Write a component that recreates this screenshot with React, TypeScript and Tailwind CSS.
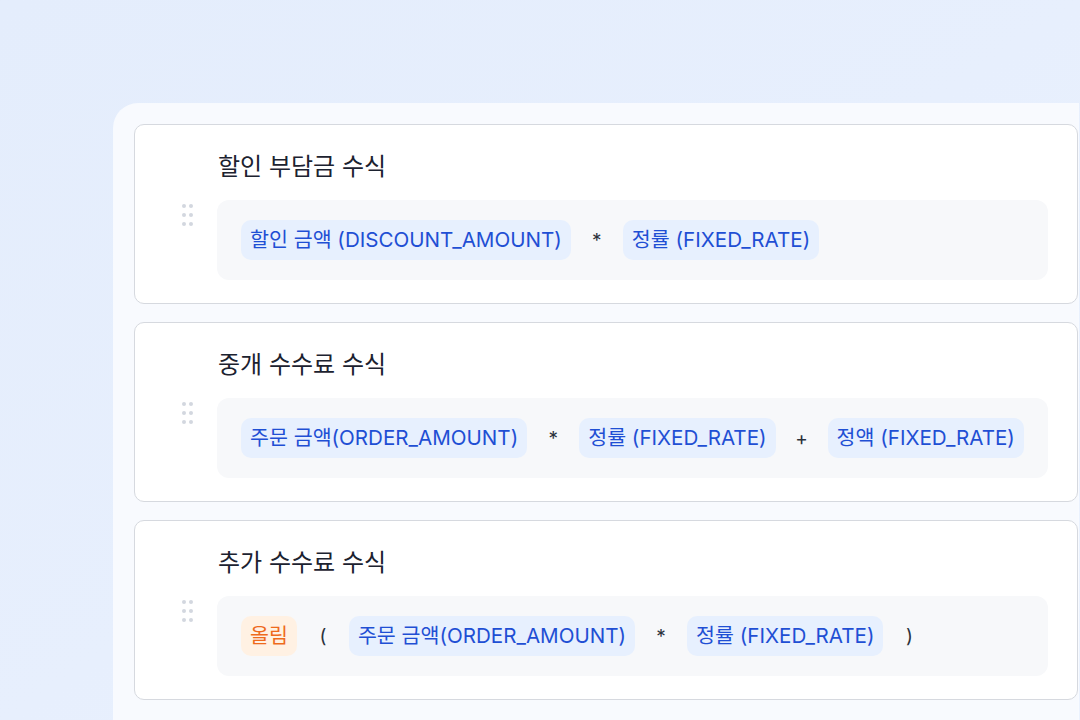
import React from "react";

type Token =
  | { kind: "chip"; text: string; tone?: "blue" | "orange" }
  | { kind: "op"; text: string };

const FONT = { fontFamily: 'Inter, "Noto Sans CJK KR", "Noto Sans", sans-serif' };

function Handle() {
  return (
    <div className="mt-1 grid w-[11px] shrink-0 grid-cols-2 gap-x-[3px] gap-y-[5px]">
      {Array.from({ length: 6 }).map((_, i) => (
        <span key={i} className="h-1 w-1 rounded-full bg-[#d3d7df]" />
      ))}
    </div>
  );
}

function Chip({ text, tone = "blue" }: { text: string; tone?: "blue" | "orange" }) {
  const cls =
    tone === "orange"
      ? "bg-[#fff1e3] text-[#ee6a1c]"
      : "bg-[#e7f0fe] text-[#1f4fd4]";
  return (
    <span
      className={`flex h-10 shrink-0 items-center whitespace-nowrap rounded-[10px] px-[9px] text-[20.6px] leading-none ${cls}`}
    >
      {text}
    </span>
  );
}

function Op({ text }: { text: string }) {
  return (
    <span className="flex h-10 w-7 shrink-0 items-center justify-center text-[19px] leading-none text-[#2b313b]">
      {text}
    </span>
  );
}

function FormulaCard({ title, tokens }: { title: string; tokens: Token[] }) {
  return (
    <div className="rounded-[10px] border border-[#d6d9df] bg-white pt-[26px] pb-[23px] pl-[47px] pr-[29px]">
      <div className="ml-[36px] h-8 text-[24px] leading-8 text-[#1c2230]">{title}</div>
      <div className="mt-[17px] flex items-start">
        <Handle />
        <div className="ml-6 flex h-20 min-w-0 flex-1 items-center gap-3 overflow-hidden rounded-[12px] bg-[#f7f8fa] px-6">
          {tokens.map((t, i) =>
            t.kind === "chip" ? (
              <Chip key={i} text={t.text} tone={t.tone} />
            ) : (
              <Op key={i} text={t.text} />
            )
          )}
        </div>
      </div>
    </div>
  );
}

export default function App() {
  const cards: { title: string; tokens: Token[] }[] = [
    {
      title: "할인 부담금 수식",
      tokens: [
        { kind: "chip", text: "할인 금액 (DISCOUNT_AMOUNT)" },
        { kind: "op", text: "*" },
        { kind: "chip", text: "정률 (FIXED_RATE)" },
      ],
    },
    {
      title: "중개 수수료 수식",
      tokens: [
        { kind: "chip", text: "주문 금액(ORDER_AMOUNT)" },
        { kind: "op", text: "*" },
        { kind: "chip", text: "정률 (FIXED_RATE)" },
        { kind: "op", text: "+" },
        { kind: "chip", text: "정액 (FIXED_RATE)" },
      ],
    },
    {
      title: "추가 수수료 수식",
      tokens: [
        { kind: "chip", text: "올림", tone: "orange" },
        { kind: "op", text: "(" },
        { kind: "chip", text: "주문 금액(ORDER_AMOUNT)" },
        { kind: "op", text: "*" },
        { kind: "chip", text: "정률 (FIXED_RATE)" },
        { kind: "op", text: ")" },
      ],
    },
  ];

  return (
    <div
      className="relative flex h-[720px] w-[1080px] overflow-hidden bg-gradient-to-br from-[#e4edfc] via-[#e7effd] to-[#ebf2fe] pl-[114px] pt-[104px] pr-[2px]"
      style={FONT}
    >
      <div className="relative flex min-w-0 flex-1 flex-col gap-[18px] rounded-tl-[24px] bg-[#f8fafe] pl-5 pt-5 shadow-[0_0_0_1px_rgba(255,255,255,0.7)]">
        {cards.map((c, i) => (
          <FormulaCard key={i} title={c.title} tokens={c.tokens} />
        ))}
      </div>
    </div>
  );
}
